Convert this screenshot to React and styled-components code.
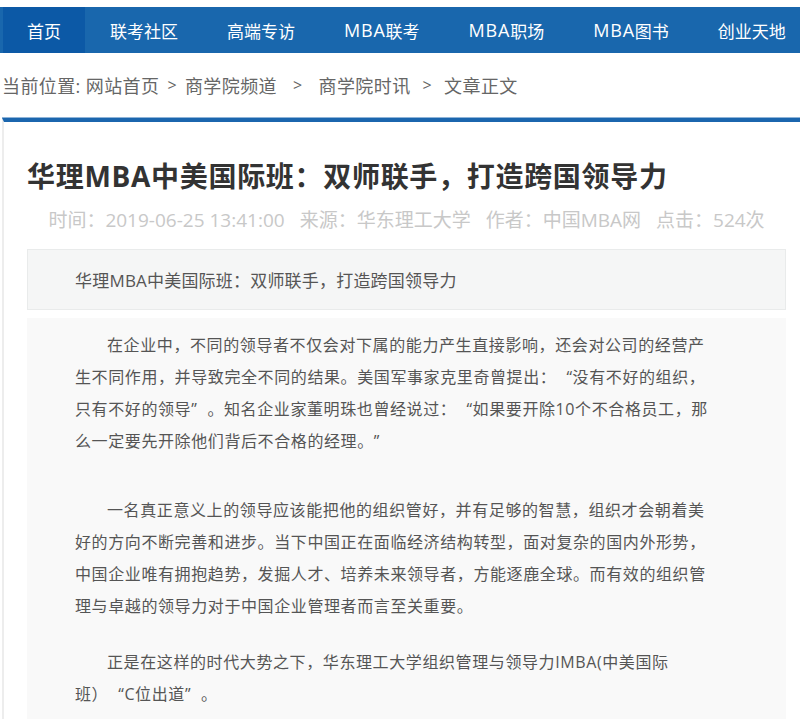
import React from "react";
import styled, { createGlobalStyle } from "styled-components";

const Global = createGlobalStyle`
  html, body {
    margin: 0;
    padding: 0;
    background: #fff;
    overflow: hidden;
  }
  body {
    font-family: "Open Sans", "Noto Sans CJK SC", sans-serif;
    text-spacing-trim: space-all;
  }
`;

const Page = styled.div`
  padding-top: 7px;
  width: 100%;
`;

const Nav = styled.nav`
  height: 46px;
  background: #1967ad;
  display: flex;
  padding-left: 3px;
  overflow: hidden;
  white-space: nowrap;
`;

const NavItem = styled.a`
  display: flex;
  align-items: center;
  padding: 0 24px;
  margin-right: 1px;
  font-size: 17px;
  color: #fff;
  text-decoration: none;
  background: ${(p) => (p.$active ? "#0c59a6" : "transparent")};
`;

const Latin = styled.span`
  font-size: 18px;
  letter-spacing: 0.8px;
`;

const Crumbs = styled.div`
  height: 65px;
  display: flex;
  align-items: center;
  padding-left: 2px;
  padding-bottom: 2px;
  box-sizing: border-box;
  font-size: 18px;
  letter-spacing: 0.4px;
  color: #666;
  white-space: nowrap;
`;

const Sep = styled.span`
  margin: 0 ${(p) => p.$space}px;
  font-size: 16px;
`;

const Article = styled.div`
  margin-left: 2px;
  border-top: 4px solid #1b66ae;
  border-left: 2px solid #ededed;
  padding: 0 14px 0 23px;
  box-shadow: 0 -1px 0 #8fb4d8;
`;

const Title = styled.h1`
  margin: 34px 0 0;
  font-size: 28px;
  line-height: 40px;
  font-weight: 700;
  letter-spacing: 0.7px;
  color: #333;
  white-space: nowrap;
`;

const Meta = styled.div`
  margin-top: 9px;
  text-align: center;
  font-size: 19px;
  line-height: 30px;
  color: #c8c8c8;
  white-space: nowrap;

  span + span {
    margin-left: 15px;
  }
`;

const Summary = styled.div`
  margin-top: 14px;
  height: 61px;
  box-sizing: border-box;
  border: 1px solid #e9ebeb;
  background: #f5f6f6;
  display: flex;
  align-items: center;
  padding-left: 47px;
  font-size: 17px;
  letter-spacing: 0.2px;
  color: #555;
`;

const Body = styled.div`
  margin-top: 8px;
  background: #f9f9f9;
  padding: 11px 75px 24px 48px;
  min-height: 420px;
`;

const Para = styled.p`
  margin: 0 0 ${(p) => p.$after || 24}px;
  text-indent: 2em;
  font-size: 16px;
  letter-spacing: 0.6px;
  line-height: 32px;
  color: #555;
`;

// curly quotes padded out to a full CJK cell
const Q = styled.span`
  ${(p) => (p.$open ? "padding-left: 10px;" : "padding-right: 10px;")}
`;

const navItems = [
  ["首页"],
  ["联考社区"],
  ["高端专访"],
  ["联考", "MBA"],
  ["职场", "MBA"],
  ["图书", "MBA"],
  ["创业天地"],
];

export default function App() {
  return (
    <Page>
      <Global />
      <Nav>
        {navItems.map(([t, pre], i) => (
          <NavItem key={t} href="#" $active={i === 0}>
            {pre && <Latin>{pre}</Latin>}
            {t}
          </NavItem>
        ))}
      </Nav>
      <Crumbs>
        <span>当前位置: 网站首页</span>
        <Sep $space={8}>&gt;</Sep>
        <span>商学院频道</span>
        <Sep $space={16}>&gt;</Sep>
        <span>商学院时讯</span>
        <Sep $space={12}>&gt;</Sep>
        <span>文章正文</span>
      </Crumbs>
      <Article>
        <Title>华理MBA中美国际班：双师联手，打造跨国领导力</Title>
        <Meta>
          <span>时间：2019-06-25 13:41:00</span>
          <span>来源：华东理工大学</span>
          <span>作者：中国MBA网</span>
          <span>点击：524次</span>
        </Meta>
        <Summary>华理MBA中美国际班：双师联手，打造跨国领导力</Summary>
        <Body>
          <Para $after={37}>
            在企业中，不同的领导者不仅会对下属的能力产生直接影响，还会对公司的经营产生不同作用，并导致完全不同的结果。美国军事家克里奇曾提出：<Q $open>“</Q>没有不好的组织，只有不好的领导<Q>”</Q>。知名企业家董明珠也曾经说过：<Q $open>“</Q>如果要开除10个不合格员工，那么一定要先开除他们背后不合格的经理。<Q>”</Q>
          </Para>
          <Para>
            一名真正意义上的领导应该能把他的组织管好，并有足够的智慧，组织才会朝着美好的方向不断完善和进步。当下中国正在面临经济结构转型，面对复杂的国内外形势，中国企业唯有拥抱趋势，发掘人才、培养未来领导者，方能逐鹿全球。而有效的组织管理与卓越的领导力对于中国企业管理者而言至关重要。
          </Para>
          <Para>
            正是在这样的时代大势之下，华东理工大学组织管理与领导力IMBA(中美国际班）<Q $open>“</Q>C位出道<Q>”</Q>。
          </Para>
        </Body>
      </Article>
    </Page>
  );
}
